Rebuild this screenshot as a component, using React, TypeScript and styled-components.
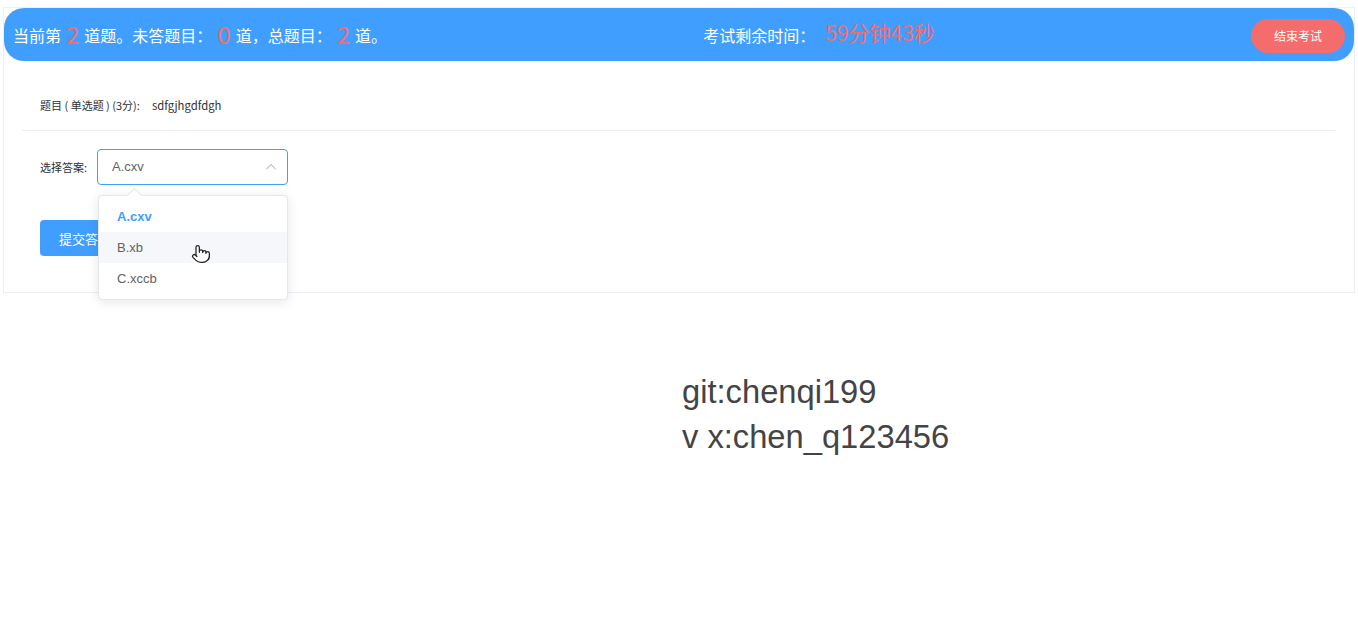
import React from "react";
import styled, { createGlobalStyle } from "styled-components";
import { Pointer } from "lucide-react";

const Global = createGlobalStyle`
  html, body { margin: 0; padding: 0; background: #fff; }
  body { font-family: "Noto Sans CJK SC", "Noto Sans", sans-serif; }
  * { box-sizing: border-box; }
`;

const Page = styled.div`
  padding: 7px 3px 0 3px;
`;

const Card = styled.div`
  border: 1px solid #ebeef5;
  border-top-color: #f0f0f0;
  background: #fff;
`;

const Header = styled.div`
  height: 53px;
  background: #409eff;
  border-radius: 20px;
  display: flex;
  align-items: center;
  justify-content: space-between;
  padding: 0 9px;
  color: #fff;
  font-size: 16px;
`;

const HeadText = styled.div`
  display: flex;
  align-items: center;
  white-space: nowrap;
  line-height: 1;
`;

const Num = styled.span<{ $gap?: number }>`
  color: #f56c6c;
  font-size: 24px;
  font-weight: 400;
  margin: 0 ${(p) => p.$gap ?? 5}px;
  position: relative;
  top: -1px;
`;

const Time = styled.span`
  color: #f56c6c;
  font-size: 21px;
  margin-left: 10px;
  position: relative;
  top: -2px;
`;

const EndButton = styled.button`
  width: 94px;
  height: 34px;
  border: none;
  border-radius: 17px;
  background: #f56c6c;
  color: #fff;
  font-family: inherit;
  font-size: 12px;
  padding: 0;
  margin-top: 2px;
`;

const Body = styled.div`
  padding: 0 18px 36px;
`;

const Question = styled.div`
  margin-top: 32px;
  padding: 0 18px 13px;
  line-height: 24px;
  font-size: 11px;
  color: #303133;
  border-bottom: 1px solid #ebeef5;
  white-space: pre;
`;

const Answer = styled.span`
  margin-left: 12px;
  font-size: 11.3px;
`;

const Form = styled.div`
  padding: 18px 18px 0;
  display: flex;
  flex-direction: column;
  gap: 35px;
`;

const FormRow = styled.div`
  display: flex;
  align-items: center;
`;

const Label = styled.span`
  font-size: 11px;
  color: #303133;
  width: 57px;
`;

const SelectWrap = styled.div`
  position: relative;
  width: 191px;
`;

const SelectBox = styled.div`
  height: 36px;
  border: 1px solid #409eff;
  border-radius: 4px;
  display: flex;
  align-items: center;
  justify-content: space-between;
  padding: 0 10px 1px 14px;
  font-family: "Liberation Sans", sans-serif;
  font-size: 13px;
  color: #606266;
`;

const Dropdown = styled.div`
  position: absolute;
  top: 46px;
  left: 1px;
  width: 190px;
  background: #fff;
  border: 1px solid #e4e7ed;
  border-radius: 4px;
  box-shadow: 0 2px 12px rgba(0, 0, 0, 0.1);
  padding: 5px 0 5px;
  z-index: 10;
  &::before {
    content: "";
    position: absolute;
    top: -6px;
    left: 30px;
    width: 10px;
    height: 10px;
    background: #fff;
    border-left: 1px solid #e4e7ed;
    border-top: 1px solid #e4e7ed;
    transform: rotate(45deg);
  }
`;

const Option = styled.div<{ $selected?: boolean; $hover?: boolean }>`
  position: relative;
  height: 31px;
  line-height: 31px;
  padding: 0 18px;
  font-family: "Liberation Sans", sans-serif;
  font-size: 13px;
  color: ${(p) => (p.$selected ? "#409eff" : "#606266")};
  font-weight: ${(p) => (p.$selected ? 700 : 400)};
  background: ${(p) => (p.$hover ? "#f5f7fa" : "transparent")};
`;

const Cursor = styled.span`
  position: absolute;
  left: 92px;
  top: 12px;
  display: flex;
  color: #222;
`;

const SubmitButton = styled.button`
  width: 96px;
  height: 36px;
  border: none;
  border-radius: 4px;
  background: #409eff;
  color: #fff;
  font-family: inherit;
  font-size: 13px;
  text-align: left;
  padding: 0 0 0 19px;
`;

const Contact = styled.div`
  margin-left: calc(50% + 3px);
  margin-top: 76px;
  font-family: "Liberation Sans", Arial, sans-serif;
  font-size: 32.7px;
  line-height: 45px;
  color: #444;
`;

export default function App() {
  return (
    <Page>
      <Global />
      <Card>
        <Header>
          <HeadText>
            当前第<Num>2</Num>道题。未答题目：<Num>0</Num>道，总题目：<Num>2</Num>道。
          </HeadText>
          <HeadText>
            考试剩余时间：<Time>59分钟43秒</Time>
          </HeadText>
          <EndButton>结束考试</EndButton>
        </Header>
        <Body>
          <Question>
            {"题目 ( 单选题 ) (3分):"}
            <Answer>sdfgjhgdfdgh</Answer>
          </Question>
          <Form>
            <FormRow>
              <Label>选择答案:</Label>
              <SelectWrap>
                <SelectBox>
                  <span>A.cxv</span>
                  <svg width="12" height="12" viewBox="0 0 12 12">
                    <path d="M1.5 8 L6 3.5 L10.5 8" fill="none" stroke="#c0c4cc" strokeWidth="1.1" />
                  </svg>
                </SelectBox>
                <Dropdown>
                  <Option $selected>A.cxv</Option>
                  <Option $hover>
                    B.xb
                    <Cursor>
                      <Pointer size={20} strokeWidth={1.5} fill="#fff" />
                    </Cursor>
                  </Option>
                  <Option>C.xccb</Option>
                </Dropdown>
              </SelectWrap>
            </FormRow>
            <FormRow>
              <SubmitButton>提交答案</SubmitButton>
            </FormRow>
          </Form>
        </Body>
      </Card>
      <Contact>
        git:chenqi199
        <br />v x:chen_q123456
      </Contact>
    </Page>
  );
}
